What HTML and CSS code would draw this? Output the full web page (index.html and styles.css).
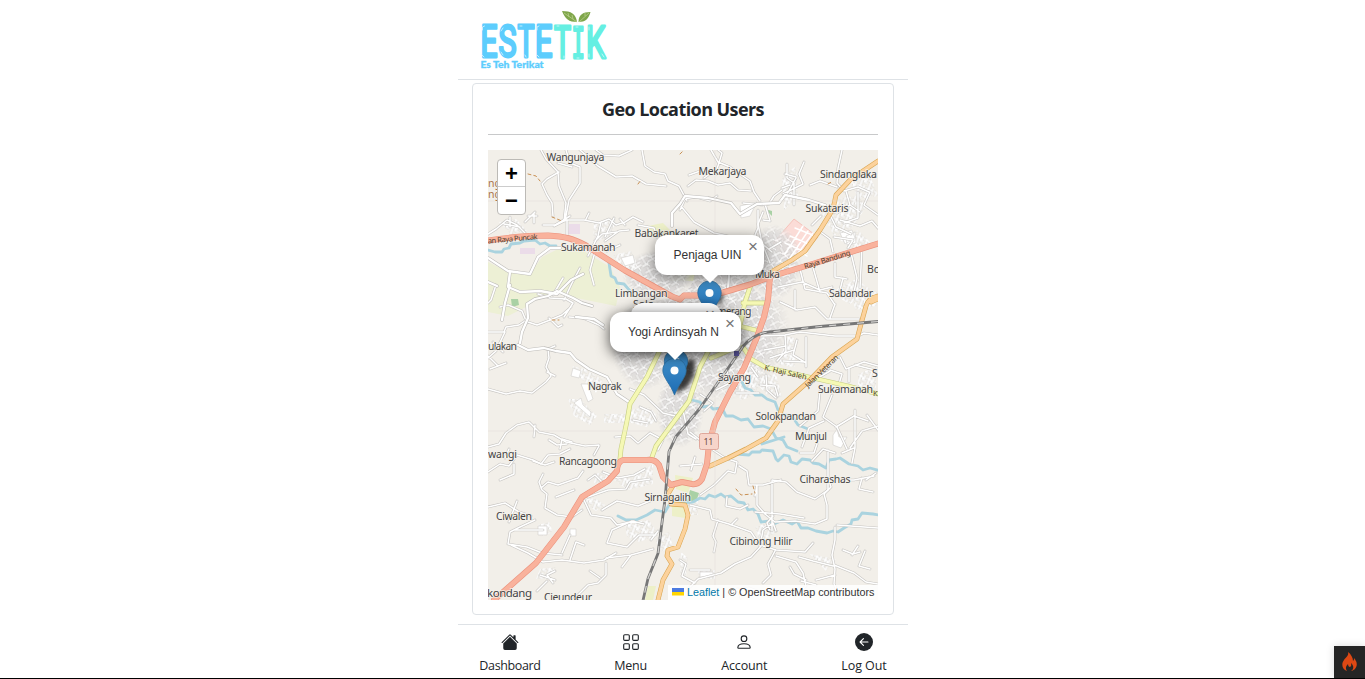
FILE: index.html
```html
<!DOCTYPE html>
<html lang="id">
<head>
<meta charset="utf-8">
<title>Geo Location Users</title>
<link rel="stylesheet" href="styles.css">
</head>
<body>
<div class="app">
  <header class="header">
    <svg class="logo" viewBox="480 8 130 64" width="130" height="64">
      <g class="logo-word">
        <g class="blue">
          <text x="480.500" y="57" textLength="17" lengthAdjust="spacingAndGlyphs">E</text>
          <text x="498.500" y="57" textLength="18" lengthAdjust="spacingAndGlyphs">S</text>
          <text x="517.500" y="57" textLength="17" lengthAdjust="spacingAndGlyphs">T</text>
          <text x="535" y="57" textLength="17.500" lengthAdjust="spacingAndGlyphs">E</text>
        </g>
        <g class="mint">
          <text x="554" y="58" textLength="17" lengthAdjust="spacingAndGlyphs">T</text>
          <text class="serif-i" x="571.500" y="58" textLength="13.500" lengthAdjust="spacingAndGlyphs">I</text>
          <text x="586" y="58" textLength="19.500" lengthAdjust="spacingAndGlyphs">K</text>
        </g>
      </g>
      <text class="logo-sub" x="480.500" y="67.500" textLength="63" lengthAdjust="spacingAndGlyphs">Es Teh Terikat</text>
      <path class="shine" d="M482.500 30v-3l2-1M501 31l2-3M520 26h2M537 30v-3l2-1M557 26h2M576 27h2M589 30v-3M482 55l2 2M501 52l2 3M525 55l1 2M537 55l2 2M564 56v2M577 58h2M589 54v3M602 54l2 3"/>
      <path class="leaf" d="M562 11c9 0 14 3 15 11-8 0-12-3-15-11ZM590.500 12c-8 0-12 3-12 10 7 0 10-3 12-10Z"/>
      <path class="vein" d="M564 13l13 9M589 13l-10 9M568 13l1 4M572 15l1 4M585 13v3"/>
    </svg>
  </header>
  <main class="main">
    <section class="card">
      <h1 class="title">Geo Location Users</h1>
      <div class="map">
        <svg class="map-canvas" viewBox="488 150 390 450" width="390" height="450">
          <defs>
            <pattern id="blocks" width="17" height="15" patternUnits="userSpaceOnUse" patternTransform="rotate(-28)">
              <rect width="17" height="15" fill="#dddbda"/>
              <path d="M0 4h9l2 3h6M4 0v10l3 5M12 0v7l2 8M0 12h5l3-2h9" fill="none" stroke="#bfbdbc" stroke-width="2.400"/>
              <path d="M0 4h9l2 3h6M4 0v10l3 5M12 0v7l2 8M0 12h5l3-2h9" fill="none" stroke="#fff" stroke-width="1.300"/>
            </pattern>
            <pattern id="hamlet" width="9" height="8" patternUnits="userSpaceOnUse" patternTransform="rotate(22)">
              <path d="M0 2h5l1 3h3M3 0v8M7 0v4" fill="none" stroke="#cfcdca" stroke-width="2.400"/>
              <path d="M0 2h5l1 3h3M3 0v8M7 0v4" fill="none" stroke="#fff" stroke-width="1.700"/>
            </pattern>
            <radialGradient id="fade"><stop offset="0" stop-color="#fff"/><stop offset=".75" stop-color="#ddd"/><stop offset="1" stop-color="#000"/></radialGradient>
            <mask id="town">
              <ellipse cx="715" cy="330" rx="76" ry="72" fill="url(#fade)"/>
              <ellipse cx="645" cy="345" rx="34" ry="45" fill="url(#fade)"/>
              <ellipse cx="774" cy="262" rx="28" ry="38" fill="url(#fade)"/>
              <ellipse cx="658" cy="275" rx="36" ry="25" fill="url(#fade)"/>
              <ellipse cx="680" cy="410" rx="24" ry="38" fill="url(#fade)"/>
            </mask>
            <linearGradient id="pin-fill" x2="0" y2="1"><stop stop-color="#3f8fc9"/><stop offset="1" stop-color="#1d6cb4"/></linearGradient>
            <filter id="soft"><feGaussianBlur stdDeviation="2"/></filter>
            <g id="pin">
              <path d="M.8 12.500C.8 5.500 6 .5 12.500.5S24.200 5.500 24.200 12.500c0 7-8 14-11.700 24.500C8.800 26.500.8 19.500.8 12.500Z" fill="url(#pin-fill)" stroke="#2b6f9f" stroke-width=".8"/>
              <circle cx="12.500" cy="12.500" r="4" fill="#fff"/>
            </g>
            <g id="lanes">
              <path d="M541 150l5 9 12 13 1 14 7 17-2 18-10 5M566 150l4 13 10 4v16l-11 17-4 21M559 172l-12 7-5 5 5 11 5 8 1 13M572 167l-14-4M580 150l18 16 18 11 16-1 14 8 20 2M632 150l-13 6-16-1-7-5M642 150l3 16 9 6 11 2 3 7 11 5 8 15"/>
              <path d="M496 229l11-9 10 5 8 8M510 217v10M504 224l16 3M525 222l10-10M528 216h9M534 213v10M496 229l-8 5M543 225h12l9-5 20 0 15 3 10-4 7 6 9-3 8-5 10 5M562 221l8-5M567 220v18M586 219l3-6M601 222l-3 14-10 20M614 218l-9 19M638 225l16 3 3 9M595 241l7-7 15-2M605 241l14-10 10-1M580 268l-8 15-8 17M595 252l-5 18 4 15M625 225l-5-6M620 245l-13 6"/>
              <path d="M488 332l16 0 2-5 13-2 6-4 12 4 13-5 12-5 9-8M538 294l12 4 16 1 7 4M549 318l9 9 4-2M573 303l-9 14M569 317l14 1 16 7 5 4M553 295l10-17M500 307l8-2 14 6 5 12M488 356l10 10 8-3M505 332l-9 19-8 7M493 342l10 10M498 366l-8 3M496 285l-5 15-3 3"/>
              <path d="M488 389l18 5 14-3 12 2 14-11 5-6-5-9 3-9-1-9 7-3M547 372l8 4M488 447l11-3 7-11 11-8 12-3 10 10 15 3 12 7 19 4 14-1M599 446l-5 9M549 440l8 5 10-1M535 425l-1 12M488 472l12-8 9 2 8-11 16 5 8 4 7-9 12-1 10-5M514 464v10l-14 6M488 507l17-4 14 9 12 4M505 458l4-9"/>
              <path d="M543 474l-4 8 3 8 5 4-2 14 12 7 15 2 10-7M541 488l7-6 10 3 20-7 5-7M556 497l18-7M533 461l12 4 9-3M560 449l2-10 10 3M535 520l-15 7-10 5-2 12 19 3 15 6 20 2M515 530l28 0M509 522l5-13 3-8M511 545l17 8 15 9 19-2 22 3 20-3 12-7M562 553l8-18M606 563v12l-8 8-10 2-15 15M600 578l-10-7M570 560l6-18 8 3"/>
              <path d="M553 583l-6-8 8-4M540 575l15 5M537 591l10-10M584 500l7 15 20 3 6 7 17-4M602 510l15-9 21 5 12-5M588 497l20-7 18-1 4-7 20-3M603 472l15 6 16-3 11-6M612 530l20-9 12 3M612 530l-5 13 20 4 12-12 17 0M606 558l25-3 22-6M631 555l-9 12M651 540l7-9M588 480l7-5 9 9M550 545l6-8"/>
              <path d="M688 186l8-6 12 1 10 4 12-2 8 7 13 1M680 210l5-11 11-2 14 4 7-5M711 150l7 12 12 5 20 14 4 11 6 9M718 150l4 3-5 16-13 9M743 203l18 2 8-1 5-8 8-6M783 194l10-5 10-5-4-10 5-12M787 164v14l7 5 0 22M782 188l8-3M785 174l11 3M796 178l-10 18M765 204l5 17-7-1M758 210l0 18-3 7 5 16M680 205l14 17 20 11 18 4M689 175l14-5 13 4"/>
              <path d="M842 150l-4 18-1 15 7 8 14-4 11 5M837 187l-17-6-10 4M846 191l4 14 10 7M850 205l-13 8-17-3M858 192v26l-14 5M870 192l-6 13 14 10M840 220l20 6 12-5 6 7M831 217l5 10 15 7M821 216l-9 9M819 231l11 8 3 13M834 237l19 3-5 8M770 263l-8-20-4-19 5-12M769 249l12-7M758 240l14 12M835 263v14l12 2M851 253l6 25-4 19M862 246l-2 42M800 269l5 20 22 4 8 12M778 287l24-5 18 8 12-3M812 264l8 28M780 302l17 8 18-3 12 12 32 0M795 290v20M835 304l-5 14M843 278l-3 12"/>
              <path d="M760 336l25-1 15-3 35 4 23 0 6-3 14 2M785 335l1 16-9 10M797 340l-4 15 13 8M806 337l0 30M764 350l22-4M770 358l24-8M783 361l21 1M840 357l6 12 18-7 14 4M849 369v13M855 365l20 5M830 370l12 4-3 10M830 371l-14 8M758 377l-7-10M766 375l1 15 9 8M760 385l15 1 3 10M736 393l23 0M820 391l-2 20-18 15M832 395l-9 22 14 10 10 22M836 427l18-11 14 5M824 421l-15 7-7 19M850 448l12-17 16-5M867 415l11 15M855 410v38l-3 15M800 453l14 0 3-9M812 461l11-12 12 4M828 450v40l-13 9-18-7-11-10-14-2M842 453l12-5"/>
              <path d="M680 466l22-2M695 457l-4 13M713 450l12 8 12 4-2 11-7-2-14 14-14 10M739 466l8 5 2 14 14 0 18-5M749 485l8 0-2 11M772 481l0 50M727 497l-1 9 14 3 8-4M757 486l0 19 8 9 10 8 20-1 20 3 12-5 0-14-3-11 7-7-2-7M755 512l25 2 24 4M690 505l20 5 2 9 17 5 22 8 6 9M731 525l6-6M718 520l-5 16 3 6-2 10M770 530l-3-7 6-7M760 546l3-16 10-7 3 8"/>
              <path d="M762 545l-11 12-16 7-14 9-23 6-8 8M763 546l13 4 29 2 8-9M775 551l-7 13 3 11-8 8M776 556l20 6 7 11 3 13-11 10M799 557l14 4 20 5M806 580l-12-6-4-7M801 581l15 4M835 527v13l-3 15 3 14-1 15 6 13 18 0M834 565l20 8 12 9 12 2M835 575l-19 5M865 551l-6 15 11 3M843 550l10 4 7-2M852 555l6-9M837 525l41 3M680 560l6 4-4 12 13 7M690 570l20 0M840 480l14 0 20-4M862 478l-3 11 14 3M876 473l-10 7M738 590l11-2 8 3M728 594l10-5 3 9"/>
              <path d="M630 389l14 6 19 18 12 3M615 437l15-1 8 7 12-10M640 407l11 5 5 9M650 433l13 7-5 10M633 420l15 3M683 410l5 24 8 5M690 432l10 8 13-8M700 394l13 9-9 8M728 368l-2 12 11 8M716 390l12-6"/>
            </g>
            <g id="streets">
              <path d="M488 258l20 13 22 3 8-17 12-9 10 0M510 272l-2 15 12 5 20-1 17 3 14-14 12-6M510 285l-5 18-3 17M488 282l9 4"/>
              <path d="M520 343l2-11 6-14-1-14 8-5 13-3 9-5 16 7 9 5 10 3M518 345l10 5 16-2 12 3 14 2 6 7 13 9 18 8 10 17 12 8M576 317l18 2 9 6"/>
              <path d="M680 204l5-8 23 2 23 5 9 11 17-10 22-1 6-8 24 5 16 5M672 226l0-13 8-9M708 294l-3 8M729 275l-1 14"/>
            </g>
            <g id="trunk">
              <path d="M488 240.500c20-3 40-5 60-5 17 1 25 3 38 10l39 25 47 26 8 3 4-4h18l21-3 27-8 21-8 43-13 64-20M770 277l-2 23-4 17-7 20-13 31-14 24-15 30-6 22-2 20-5 15q-4 6-10 5l-10-2-11 3-8-8-4-12q-4-6-12-5h-24q-6 2-6 11l-9 10-26 16-18 30-28 36-26 23-16 14"/>
            </g>
            <g id="orange">
              <path d="M878 161l-27 18-15 16-3 14-13 21-15 21-13 9-21 12M878 296q-10 2-12 10l-5 18-4 15-25 18-23 24-26 23-5 17-12 17-20 11-18 9-18 8M674 484l-6 10 3 10 14 1 3 10-3 14-7 18-10 3-1 6 5 8-9 16-5 20M878 299l-7 3"/>
            </g>
            <g id="yellow">
              <path d="M660 350l-13 27-17 27-3 17-6 28-1 10M708 352l-8 15-11 34-22 30-11 15-5 14M751 284l-6 18-5 24-10 24-19 8M743 303h23M739 326l20 5M743 347l8 12 14 8 48 11 35 8 30 8"/>
            </g>
            <path id="rail" d="M878 321.500l-58 5-55 6q-13 3-22 14l-6 9-38 54-23 27-7 15-4 48-7 54-10 25-5 22"/>
          </defs>

          <rect x="488" y="150" width="390" height="450" fill="#f2efe9"/>
          <path d="M488 262l20 10 22 2 12-17 18-9 22 2 28 17 10 20-4 19-40-8-16-5-25 7-9 7-18 9-20-4Z" fill="#edf0d5"/>
          <path d="M670 271h25v10h-25ZM648 226l15-3 9 9-9 5h-14ZM672 506h15l-2 12-13-2ZM648 586h8l-3 14h-8ZM675 475l18 3-5 15-12-4Z" fill="#edf0c8"/>
          <path d="M569 224h11v10h-12ZM520 248h15v6h-15Z" fill="#ebdce9"/>
          <path d="M773 243l21-24 24 18-16 18-13 7Z" fill="#fbdcd7" stroke="#f5b4aa" stroke-width=".7"/>
          <path d="M511 299l7 0 1 6-7 2ZM690 490l9 3-3 9-9 0ZM765 209l7 2v5Z" fill="#a9d1a5"/>
          <rect x="488" y="150" width="390" height="450" fill="url(#blocks)" mask="url(#town)"/>
          <g fill="url(#hamlet)">
            <path d="M499 222l17-3 11 12-16 3ZM613 255l18-4 8 16-12 7ZM594 222l22-3-5 17-18 7ZM572 366l13 3 18 11-7 13-18-17ZM568 399l12 0 17 17-7 9-16-9ZM604 414h22v9h-22ZM630 410l20-3 9 12-12 8-19-5ZM538 525l11-3 4 10-13 5ZM594 473h16v10h-16ZM614 480l21-4 18-12v20l-25 6ZM580 500l15-2 10 7-9 6ZM625 523l24-3 10 15-20 7-12-5ZM540 569l16-2-8 12-12 0ZM655 538l14-6 4 15-13 5Z"/>
            <path d="M820 209l22-11 18-3 5 14-16 22-15 5ZM850 180l20-4 8 20-20 3ZM782 177l14-11 2 30-14 14ZM838 238l20-8 12 12-13 12ZM830 293l26-14 14 10-20 15ZM858 374l18-7v21h-18ZM810 554l26 5-10 12ZM698 570h17v9h-17ZM785 337l10 0 0 30-16-2ZM752 378l24-4 6 23-16-3ZM688 503l10-4v16h-10ZM755 527l13-4 7 10-15 10ZM681 552l7 6-2 18-6-3ZM852 292l25 0v14l-22 4ZM738 369l11-9 12 13-5 21-16 7Z"/>
          </g>
          <g class="town-parcels"><path d="M740 206l17-4-7 14-9 2ZM840 233l12-3 3 8-10 6ZM833 435l4-6 2 8 8 0-6 11-8-3ZM581 384l7 0 5 15-5 3ZM574 403l7-5 2 7 8 7-1 5ZM538 526h9v9h-9ZM573 368l8 3-2 7-8-2ZM697 303l9-5 5 8-7 7ZM570 529h6v7h-6ZM621 258l12-3 2 8-10 3ZM846 236l9-4 1 11-9 2ZM700 572h13v5h-13Z"/></g>
          <path class="estate" d="M785 254l18-28M790 258l18-27M796 256l17-23M785 243l22 10M790 236l21 9M795 228l20 8M801 252l6 4"/>

          <path class="water" d="M488 250l7 2 7 0 2-3 5-1 2-4 9-1 4-2 11-1 5 4 5-1 5 3 6 0M609 263l2 13 4 2 2 5 7 1 7 8M742 382l3 6 6 2 4 5 7 0 5 4 8 3 3 8 6 5 8 1 6 9 10 4M692 400l8 2 3 5 7-1 3 3 9-1 4 8 7 0 8 4 7-1 6 8 9-1 8 3 5 9 7 2 4 7 10 4M736 454l13 1 3-3 8 0 2-2 11 1 3 8 2 2 6-6 5 1 2 6 6 2 5-5 8 1 3 3 6 1 7 4 3-8 7-1 4-1 9 6 9 2 5 4 7-2 11 3M679 503l14-1 7-4 5 1 4-4 6 2 6-3 4 3 6-1 7 6 6 1 4 7 5-1 5 5 3 8 9-1 4 3 9-4 9 4 5-3 4 7 7 0 8 3 11 2 6-2 5 1 6-4 7-4 1-4 6-1 4-6 11 1 16 3M618 516l8 4h10l11-5 8-5 10 2 7-12M762 444l22-7"/>
          <use href="#lanes" class="lane-case"/><use href="#lanes" class="lane-fill"/>
          <use href="#streets" class="street-case"/><use href="#streets" class="street-fill"/>
          <use href="#yellow" class="yellow-case"/><use href="#yellow" class="yellow-fill"/>
          <use href="#orange" class="orange-case"/><use href="#orange" class="orange-fill"/>
          <use href="#trunk" class="trunk-case"/><use href="#trunk" class="trunk-fill"/>
          <use href="#rail" class="rail-base"/><use href="#rail" class="rail-dash"/>
          <path class="track" d="M528 174l8 2 4 5M552 217l10 4M828 184l5-3M680 154l4-4M736 489l5 6 11-1M552 320h7M638 184l3-4M753 486l2 7"/>
          <path d="M488 201h390M488 431h390M715 150v450" stroke="#dedbd5" stroke-opacity=".45" fill="none"/>
          <rect x="734" y="351" width="5" height="5" fill="#5a559b"/>
          <rect x="699.500" y="433.500" width="19" height="16" rx="2" fill="#f7d5ca" stroke="#dfa79b"/>
          <text x="703.500" y="445" class="label shield" textLength="10">11</text>

          <g class="label">
            <text x="546.500" y="160.500" textLength="58">Wangunjaya</text><text x="698.500" y="174.500" textLength="48">Mekarjaya</text>
            <text x="820" y="178" textLength="57">Sindanglaka</text><text x="805.500" y="212" textLength="43">Sukataris</text>
            <text x="634.500" y="237" textLength="64">Babakankaret</text><text x="561" y="250.500" textLength="54.500">Sukamanah</text>
            <text x="615" y="297" textLength="52.500">Limbangan</text><text x="755" y="278" textLength="25">Muka</text>
            <text x="867" y="273">Bo</text><text x="829" y="296.500" textLength="44">Sabandar</text>
            <text x="633" y="308">Solo</text><text x="706" y="315" textLength="45.500">Pamerang</text>
            <text x="488" y="350" textLength="29">ulakan</text><text x="588" y="390" textLength="33.500">Nagrak</text>
            <text x="718" y="381" textLength="33">Sayang</text><text x="872" y="377">S</text>
            <text x="818" y="393" textLength="55">Sukamanah</text><text x="755.500" y="420" textLength="60.500">Solokpandan</text>
            <text x="795" y="439.500" textLength="32">Munjul</text><text x="488" y="458" textLength="29">wangi</text>
            <text x="559" y="465" textLength="58">Rancagoong</text><text x="799.500" y="483" textLength="51">Ciharashas</text>
            <text x="644.500" y="501" textLength="46.500">Sirnagalih</text><text x="496" y="520" textLength="36">Ciwalen</text>
            <text x="729.500" y="545" textLength="63">Cibinong Hilir</text><text x="544" y="600.500" textLength="48">Cieundeur</text>
            <text x="487" y="597" class="large" textLength="45">kondang</text>
          </g>
          <g class="label brown"><text x="488" y="187">ng</text><text x="488" y="198">ng</text></g>
          <g class="label road-name">
            <text transform="translate(488 243.500) rotate(-5)" textLength="50">an Raya Puncak</text>
            <text transform="translate(805 269) rotate(-17)" textLength="48">Raya Bandung</text>
            <text transform="translate(764 370) rotate(13)" textLength="43">K. Haji Saleh</text>
            <text transform="translate(808 388) rotate(-44)" textLength="43">Jalan Veteran</text>
            <text x="873" y="396">K.</text>
          </g>

          <g class="pin-shadow" filter="url(#soft)">
            <path d="M675 394l4-23q8-10 15-6 4 9-8 23ZM677 386l4-21q8-8 14-5 1 10-12 22ZM716 302l4-8q4-1 3 5l-3 5Z"/>
          </g>
          <use href="#pin" x="697" y="280.500"/><use href="#pin" x="663.500" y="349"/><use href="#pin" x="662" y="358"/>
        </svg>
        <div class="zoom"><span>+</span><span>−</span></div>
        <div class="popup penjaga">Penjaga UIN<i class="close">×</i></div>
        <div class="popup hidden-user"><i class="close">×</i></div>
        <div class="popup yogi">Yogi Ardinsyah N<i class="close">×</i></div>
        <div class="attribution"><svg width="12" height="8" viewBox="0 0 12 8"><path fill="#4c7be1" d="M0 0h12v4H0z"/><path fill="#ffd500" d="M0 4h12v3.500H0z"/></svg> <a>Leaflet</a> | © OpenStreetMap contributors</div>
      </div>
    </section>
  </main>
  <nav class="nav">
    <a class="item dashboard"><svg width="18" height="18" viewBox="0 0 16 16"><path d="M8.700 1.500a1 1 0 0 0-1.400 0L.6 8.150a.5.500 0 0 0 .7.700L8 2.200l6.650 6.650a.5.500 0 0 0 .7-.7L13 5.800V2.500a.5.500 0 0 0-.5-.5h-1a.5.500 0 0 0-.5.500v1.300ZM8 3.300l6 6v4.200a1.500 1.500 0 0 1-1.500 1.500h-9A1.500 1.500 0 0 1 2 13.500V9.300Z"/></svg><span>Dashboard</span></a>
    <a class="item menu"><svg width="18" height="18" viewBox="0 0 16 16" class="line"><rect x="1.500" y="1.500" width="5" height="5" rx="1"/><rect x="9.500" y="1.500" width="5" height="5" rx="1"/><rect x="1.500" y="9.500" width="5" height="5" rx="1"/><rect x="9.500" y="9.500" width="5" height="5" rx="1"/></svg><span>Menu</span></a>
    <a class="item account"><svg width="18" height="18" viewBox="0 0 16 16" class="line"><circle cx="8" cy="5" r="2.500"/><path d="M2.500 13c0-2 1.800-3.500 5.500-3.500s5.500 1.500 5.500 3.500q0 .5-.7.500H3.200q-.7 0-.7-.5Z"/></svg><span>Account</span></a>
    <a class="item logout"><svg width="18" height="18" viewBox="0 0 16 16"><circle cx="8" cy="8" r="8"/><path d="M11.500 8h-7m3-3-3 3 3 3" fill="none" stroke="#fff" stroke-linecap="round" stroke-linejoin="round"/></svg><span>Log Out</span></a>
  </nav>
</div>
<div class="debug-bar"></div>
<div class="debug-icon"><svg width="15" height="20" viewBox="0 0 15 20"><path d="M6 0c1 4-2 5-4 8-3 4-2 9 3 11-2-3-1-5 1-7 0 2 1 3 2 3 2-1 1-3 1-4 3 3 3 6 0 8 5-1 7-6 5-10-1-1-1-2-1-3-1 1-1 2-2 3C11 6 9 2 6 0Z" fill="#dd4814"/></svg></div>
</body>
</html>
```
FILE: styles.css
```css
* { box-sizing: border-box; }
body { margin: 0; background: #fff; color: #212529; font-family: "Open Sans", "Noto Sans", sans-serif; overflow: hidden; }
.app { width: 450px; height: 679px; margin: 0 457px 0 458px; display: flex; flex-direction: column; }
.header { height: 80px; padding: 8px 22px; border-bottom: 1px solid #dee2e6; }
.logo { display: block; overflow: visible; }
.logo-word { font: 400 44px Roboto, sans-serif; stroke-width: 2.8; stroke-linejoin: round; }
.logo-word .serif-i { font-family: "DejaVu Sans Mono", monospace; font-size: 43px; }
.blue { fill: #5dcdfd; stroke: #5dcdfd; }
.mint { fill: #65efe2; stroke: #65efe2; }
.logo-sub { font: 900 9.5px Lato, sans-serif; fill: #5dcdfd; stroke: #5dcdfd; stroke-width: .3; }
.shine { fill: none; stroke: #d9f8ff; stroke-width: .8; stroke-linecap: round; }
.leaf { fill: #7fa64b; }
.vein { fill: none; stroke: #c1d594; stroke-width: .7; }
.main { height: 544px; padding: 3px 14px 0; }
.card { height: 532px; border: 1px solid #dee2e6; border-radius: 4px; padding: 0 15px; }
.title { margin: 0 0 15px; height: 51px; border-bottom: 1px solid #c8c9ca; text-align: center; font-size: 18px; line-height: 51px; font-weight: 700; letter-spacing: -.57px; }
.map { position: relative; width: 390px; height: 450px; overflow: hidden; font-family: "Liberation Sans", Arial, sans-serif; }
.map-canvas { display: block; }
.lane-case, .lane-fill, .street-case, .street-fill, .yellow-case, .yellow-fill, .orange-case, .orange-fill, .trunk-case, .trunk-fill, .rail-base, .rail-dash, .water, .track, .estate { fill: none; stroke-linejoin: round; stroke-linecap: round; }
.lane-case { stroke: #c6c4c1; stroke-width: 2.7; }
.lane-fill { stroke: #fff; stroke-width: 1.5; }
.street-case { stroke: #bfbdba; stroke-width: 3.4; }
.street-fill { stroke: #fff; stroke-width: 2.3; }
.yellow-case { stroke: #c6cd83; stroke-width: 4.8; }
.yellow-fill { stroke: #f5f8b4; stroke-width: 3.6; }
.orange-case { stroke: #d9a653; stroke-width: 4.8; }
.orange-fill { stroke: #fcd29c; stroke-width: 3.6; }
.trunk-case { stroke: #eb927d; stroke-width: 6; }
.trunk-fill { stroke: #f9b29c; stroke-width: 4.8; }
.rail-base { stroke: #777; stroke-width: 2.8; }
.rail-dash { stroke: #d2d1cf; stroke-width: 1.2; stroke-dasharray: 7 7; stroke-linecap: butt; }
.water { stroke: #aad3df; stroke-width: 2.8; }
.track { stroke: #c99155; stroke-width: 1; stroke-dasharray: 3 3; }
.estate { stroke: #fff; stroke-width: 1.5; }
.town-parcels { fill: #fff; stroke: #d0cecb; stroke-width: .6; }
.label { font-family: "Noto Sans", sans-serif; font-size: 10.5px; fill: #444; stroke: #f5f2ec; stroke-opacity: .75; stroke-width: 1.8; paint-order: stroke; stroke-linejoin: round; }
.label .large { font-size: 11.5px; }
.label.shield { font-size: 9px; fill: #6b4a44; stroke: none; }
.label.brown { fill: #a9744b; }
.label.road-name { font-size: 7.5px; fill: #4d3d2d; stroke: none; }
.pin-shadow { fill: #000; fill-opacity: .75; }
.zoom { position: absolute; left: 9px; top: 9px; width: 29px; height: 56px; border: 1px solid #bcbab6; border-radius: 4px; background: #fff; display: flex; flex-direction: column; overflow: hidden; }
.zoom span { height: 26px; font: bold 22px/27px "Liberation Sans", sans-serif; text-align: center; color: #000; }
.zoom span + span { height: 28px; border-top: 1px solid #ccc; }
.popup { position: absolute; height: 40px; border-radius: 12px; background: #fff; color: #333; font-size: 12px; line-height: 40px; text-align: center; white-space: nowrap; padding-right: 4px; box-shadow: 0 3px 14px rgba(0,0,0,.5); }
.popup::after { content: ""; position: absolute; left: calc(50% - 9px); top: 39px; border: 9px solid transparent; border-top-color: #fff; border-bottom: 0; }
.penjaga { left: 167px; top: 85px; width: 109px; }
.hidden-user { left: 143px; top: 153px; width: 90px; }
.yogi { left: 122px; top: 162px; width: 131px; box-shadow: 0 3px 14px rgba(0,0,0,.7); }
.popup.yogi::after { left: 56px; }
.close { position: absolute; right: 6px; top: 2px; font: normal 17px/20px "Liberation Sans", sans-serif; color: #757575; }
.attribution { position: absolute; right: 0; bottom: 0; width: 210px; height: 15px; padding-left: 4px; background: rgba(255,255,255,.85); color: #333; font-size: 10.8px; line-height: 15px; letter-spacing: -.01px; white-space: nowrap; }
.attribution a { color: #0078a8; }
.nav { height: 54px; border-top: 1px solid #dee2e6; display: flex; justify-content: space-between; padding: 8px 21px 0; font-size: 12.5px; }
.item { display: flex; flex-direction: column; align-items: center; gap: 6px; line-height: 18px; }
.item svg { display: block; fill: #212529; }
.item svg.line { fill: none; stroke: #212529; }
.dashboard { width: 62px; letter-spacing: -.35px; }
.account { width: 48px; letter-spacing: -.15px; }
.menu { width: 34px; letter-spacing: -.2px; }
.logout { width: 46px; letter-spacing: -.1px; }
.debug-bar { position: absolute; left: 0; right: 0; top: 678px; height: 1px; background: #000; }
.debug-icon { position: absolute; right: 0; top: 646px; width: 31px; height: 32px; background: #252525; display: flex; align-items: center; justify-content: center; box-shadow: 0 0 8px rgba(0,0,0,.15); }
```
